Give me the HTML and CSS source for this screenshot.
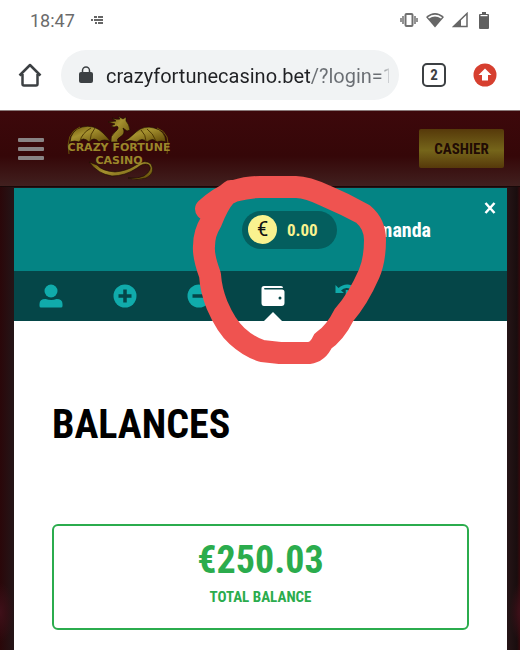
FILE: index.html
```html
<!DOCTYPE html>
<html lang="en">
<head>
  <meta charset="UTF-8">
  <meta name="viewport" content="width=device-width, initial-scale=1">
  <title>Crazy Fortune Casino</title>
  <link rel="stylesheet" href="styles.css">
</head>
<body>
  <div class="status-bar">
    <span class="clock">18:47</span>
    <svg class="notif" width="12" height="10" viewBox="0 0 12 10" fill="#666">
      <path d="M0 4h2v2H0zM3 4h9v2H3zM3 1h3v2H3zM7 1h5v2H7zM4 7h2v2H4zM7 7h5v2H7z"/>
    </svg>
    <div class="status-icons">
      <svg width="18" height="14" viewBox="0 0 18 14" fill="none" stroke="#707070" stroke-width="2">
        <rect x="5.500" y="1" width="7" height="12" rx="1"/>
        <path d="M3 3v8M15 3v8M1 5v4M17 5v4" stroke-width="1.500"/>
      </svg>
      <svg width="20" height="16" viewBox="0 0 20 16">
        <path d="M1 5Q10-3 19 5L10 15.500z" fill="#666"/>
        <path d="M3 5.200Q10 .300 17 5.200L16 6.400Q10 2.800 4 6.400z" fill="#fff"/>
      </svg>
      <svg width="16" height="16" viewBox="0 0 16 16">
        <path d="M1.500 14.500H15V1.500z" fill="none" stroke="#666" stroke-width="1.500"/>
        <path d="M1 15h8V7z" fill="#666"/>
      </svg>
      <svg class="battery" width="12" height="17" viewBox="0 0 12 17" fill="#5f5f5f">
        <path d="M4 0h4v2h2q1 0 1 1v13q0 1-1 1H2q-1 0-1-1V3q0-1 1-1h2z"/>
        <path d="M2.500 3h7v1.200h-7z" fill="#fff"/>
      </svg>
    </div>
  </div>

  <div class="toolbar">
    <button class="tool-btn" aria-label="Home">
      <svg width="24" height="24" viewBox="0 0 24 24" fill="none" stroke="#3c4043" stroke-width="2.500" stroke-linejoin="round">
        <path d="M1.500 12.500L12 2l10.500 10.500M4.500 11v10q0 1.500 1.500 1.500h12q1.500 0 1.500-1.500V11"/>
      </svg>
    </button>
    <div class="address">
      <svg width="14" height="18" viewBox="0 0 14 18">
        <rect x="0" y="6" width="14" height="11" rx="2" fill="#3c4043"/>
        <path d="M3.500 7V4.500a3.500 3.500 0 0 1 7 0V7" fill="none" stroke="#3c4043" stroke-width="1.500"/>
      </svg>
      <input class="url" type="text" aria-label="Address" value="crazyfortunecasino.bet/?login=1">
    </div>
    <button class="tool-btn tabs-btn" aria-label="Open tabs"><span class="tab-count">2</span></button>
    <button class="tool-btn" aria-label="Update">
      <svg width="24" height="24" viewBox="0 0 24 24">
        <circle cx="12" cy="12" r="11.500" fill="#d63f2f"/>
        <path d="M12 5.500l6.500 6.500H15v5.500H9V12H5.500z" fill="#fff"/>
      </svg>
    </button>
  </div>

  <div class="site">
    <header class="site-header">
      <button class="menu-btn" aria-label="Menu"><i></i><i></i><i></i></button>
      <svg class="logo" width="120" height="75" viewBox="0 0 120 75" role="img" aria-label="Crazy Fortune Casino">
        <defs>
          <linearGradient id="gold" x1="0" y1="0" x2="1" y2="1">
            <stop offset="0" stop-color="#6b5208"/>
            <stop offset=".4" stop-color="#a5912f"/>
            <stop offset="1" stop-color="#5f4705"/>
          </linearGradient>
        </defs>
        <g fill="url(#gold)" stroke="#1a0a00" stroke-width=".6">
          <path d="M10 31Q11 19 22 16Q34 13 43 22Q48 27 51 31Q44 27 39 31Q34 25 29 31Q23 25 19 31Q15 29 10 31z"/>
          <path d="M106 31Q105 19 94 17Q84 14 76 21Q69 28 63 31Q71 28 77 31Q82 26 87 31Q93 26 97 31Q101 29 106 31z"/>
          <path d="M51 31Q50 25 55 21Q60 17 57 15Q54 17 51 15L55 13L48 11L56 10L52 7Q57 9 60 8L58 5L63 8L66 6L66 10Q69 13 70 19L67 20L63 17Q66 23 60 26Q56 28 58 31z"/>
          <path d="M29 51L37 54Q42 60 55 61Q67 60 76 54Q85 48 91 53Q96 62 86 67Q77 70 68 67Q78 68 84 65Q93 59 89 54Q84 51 77 57Q65 65 52 65Q38 63 29 51z"/>
        </g>
        <g fill="none" stroke="#6b5608" stroke-width="1">
          <path d="M9 43Q5 22 20 16M107 43Q112 22 97 17"/>
          <path d="M20 30Q22 22 31 17M30 30Q30 23 35 17M96 30Q93 22 87 18M86 30Q86 24 81 19" stroke="#4f3904"/>
        </g>
        <g class="logo-text" fill="#9b872a">
          <text x="59" y="40" text-anchor="middle">CRAZY FORTUNE</text>
          <text x="59" y="53" text-anchor="middle">CASINO</text>
        </g>
      </svg>
      <button class="cashier">CASHIER</button>
    </header>

    <main class="panel">
      <div class="account">
        <div class="balance-pill">
          <span class="coin">€</span>
          <span>0.00</span>
        </div>
        <span class="username">Amanda</span>
        <button class="close" aria-label="Close">
          <svg width="12" height="12" viewBox="0 0 12 12" stroke="#fff" stroke-width="2.500"><path d="M1.500 1l9 10M10.500 1l-9 10"/></svg>
        </button>
        <!-- hand-drawn marker ring -->
        <svg class="marker" width="196" height="192" viewBox="192 174 196 192" fill="none" stroke="#ef5350" stroke-width="22" stroke-linecap="round" stroke-linejoin="round">
          <path d="M206 209Q218 198 234 191Q248 187 260 187H296Q307 187 326 196Q345 204 363 214Q375 224 375 240Q375 260 369 274Q358 299 344 315Q335 333 323 341Q318 352 309 353H280L262 351Q249 347 237 336Q226 326 217 305Q211 290 210 275Q203 256 204 246Q204 233 211 222Q218 204 226 195L231 191"/>
        </svg>
      </div>

      <nav class="tabs">
        <a class="tab" href="#profile" aria-label="Profile">
          <svg width="24" height="24" viewBox="0 0 24 24"><circle cx="12" cy="7" r="6.500"/><path d="M.500 20q0-5 6-5 6 2 11 0 6 0 6 5v2q0 1.500-1.500 1.500H2Q.500 23.500.500 22z"/></svg>
        </a>
        <a class="tab" href="#deposit" aria-label="Deposit">
          <svg width="24" height="24" viewBox="0 0 24 24"><circle cx="12" cy="12" r="11.500"/><path d="M12 5.500v13M5.500 12h13" stroke="#054648" stroke-width="3.500"/></svg>
        </a>
        <a class="tab" href="#withdraw" aria-label="Withdraw">
          <svg width="24" height="24" viewBox="0 0 24 24"><circle cx="12" cy="12" r="11.500"/><path d="M5.500 12h13" stroke="#054648" stroke-width="3.500"/></svg>
        </a>
        <a class="tab active" href="#balances" aria-label="Balances">
          <svg width="24" height="24" viewBox="0 0 24 24"><path d="M3 2h17q2 0 2 2H4q-1 0-1 .700T4 5.500h17q2.500 0 2.500 2.500v11q0 3-3 3H3q-2.500 0-2.500-3V4.500Q.500 2 3 2z"/><circle cx="19" cy="14" r="1.500" fill="#054648"/></svg>
        </a>
        <a class="tab" href="#history" aria-label="History">
          <svg width="24" height="24" viewBox="0 0 24 24"><path d="M.500 1l3 3Q8 0 13 .500a11.500 11.500 0 1 1-8 20.500l2-2.500a8 8 0 1 0-1-12L9 9H.500z"/><path d="M12 6v6.500l4 3" fill="none" stroke="#10abab" stroke-width="2.500"/></svg>
        </a>
      </nav>

      <section class="content">
        <h1>BALANCES</h1>
        <div class="total">
          <strong class="amount">€250.03</strong>
          <span class="caption">TOTAL BALANCE</span>
        </div>
      </section>
    </main>
  </div>
</body>
</html>
```
FILE: styles.css
```css
* {
  box-sizing: border-box;
}
body {
  margin: 0;
  min-height: 100vh;
  display: flex;
  flex-direction: column;
  background: #fff;
  font-family: Roboto, sans-serif;
}
button {
  border: none;
  background: none;
  padding: 0;
  cursor: pointer;
}
svg {
  display: block;
  flex-shrink: 0;
}

/* phone status bar */
.status-bar {
  display: flex;
  align-items: center;
  height: 40px;
  padding: 0 30px;
}
.clock {
  font-size: 18px;
  color: #6b6b6b;
}
.notif {
  margin-left: 16px;
}
.status-icons {
  display: flex;
  align-items: center;
  gap: 7px;
  margin-left: auto;
}
.battery {
  margin-left: 3px;
}

/* browser toolbar */
.toolbar {
  display: flex;
  align-items: center;
  height: 70px;
  padding: 0 23px 0 18px;
}
.address {
  display: flex;
  flex: 1;
  align-items: center;
  gap: 13px;
  min-width: 0;
  height: 50px;
  margin: 0 23px 0 19px;
  padding: 0 10px 0 18px;
  border-radius: 25px;
  background: #f1f3f4;
}
.url {
  flex: 1;
  min-width: 0;
  padding: 2px 0 0;
  border: none;
  outline: none;
  font: 20px Roboto, sans-serif;
  color: transparent;
  background: linear-gradient(to right, #202124 205px, #6a6e73 205px, #6a6e73 274px, #f1f3f4 286px);
  -webkit-background-clip: text;
  background-clip: text;
}
.tabs-btn {
  margin-right: 27px;
}
.tab-count {
  display: block;
  width: 24px;
  height: 24px;
  border: 2px solid #3c4043;
  border-radius: 5px;
  font: bold 15px/20px "Roboto Condensed", Roboto, sans-serif;
  color: #3c4043;
}

/* casino site */
.site {
  flex: 1;
  display: flex;
  flex-direction: column;
  border-top: 1px solid #8a7a7a;
  font-family: "Roboto Condensed", Roboto, sans-serif;
  background:
    radial-gradient(ellipse 14px 30px at 0 93%, #3f1019, transparent),
    radial-gradient(ellipse 10px 30px at 100% 93%, #3f1019, transparent),
    linear-gradient(to right, #2a0709 0, #241416 13px, #241416 calc(100% - 12px), #190d0e calc(100% - 3px), #36080c 100%);
}
.site-header {
  display: flex;
  align-items: center;
  height: 76px;
  padding: 0 16px 0 18px;
  background: linear-gradient(#3d080b, #350708 60%, #41201f);
  border-bottom: 1px solid #180808;
}
.menu-btn {
  display: flex;
  flex-direction: column;
  gap: 5px;
  width: 26px;
}
.menu-btn i {
  height: 4px;
  border-radius: 1px;
  background: #898485;
}
.logo {
  margin-left: 16px;
}
.logo-text {
  font: bold 11px "DejaVu Sans", sans-serif;
}
.cashier {
  width: 85px;
  height: 39px;
  margin-left: auto;
  border-radius: 2px;
  background: linear-gradient(#56390a, #75651a 55%, #56390a);
  font: bold 15px "Roboto Condensed", Roboto, sans-serif;
  color: #210b04;
}

/* account panel */
.panel {
  flex: 1;
  margin: 1px 13px 0 14px;
  background: #fff;
}
.account {
  position: relative;
  z-index: 1;
  display: flex;
  align-items: center;
  justify-content: flex-end;
  height: 83px;
  padding-right: 76px;
  background: #048484;
}
.balance-pill {
  display: flex;
  align-items: center;
  gap: 10px;
  width: 95px;
  height: 38px;
  margin-right: auto;
  margin-left: 228px;
  padding-left: 6px;
  border-radius: 19px;
  background: #045e5e;
  font-size: 17px;
  font-weight: bold;
  color: #f9f28f;
}
.coin {
  width: 29px;
  height: 29px;
  border-radius: 50%;
  background: #f9f28f;
  color: #111;
  font: 20px/29px Roboto, sans-serif;
  text-align: center;
}
.username {
  font-size: 20px;
  font-weight: bold;
  color: #fff;
}
.close {
  position: absolute;
  top: 14px;
  right: 11px;
}
.marker {
  position: absolute;
  top: -14px;
  left: 178px;
  pointer-events: none;
}
.tabs {
  display: flex;
  height: 50px;
  background: #054648;
}
.tab {
  position: relative;
  display: flex;
  align-items: center;
  justify-content: center;
  width: 15%;
  fill: #10abab;
}
.tab.active {
  fill: #fff;
}
.tab.active::after {
  content: "";
  position: absolute;
  bottom: 0;
  border: 9px solid transparent;
  border-top-width: 0;
  border-bottom-color: #fff;
}
.content {
  padding: 80px 38px 20px;
}
h1 {
  margin: 0 0 75px;
  font-size: 40px;
  line-height: 48px;
  color: #000;
}
.total {
  display: flex;
  flex-direction: column;
  align-items: center;
  height: 106px;
  padding-top: 12px;
  border: 2px solid #2bac4d;
  border-radius: 6px;
  color: #2bac4d;
}
.amount {
  font-size: 38px;
  line-height: 44px;
}
.caption {
  margin-top: 5px;
  font-size: 15px;
  line-height: 20px;
  font-weight: bold;
}
```
